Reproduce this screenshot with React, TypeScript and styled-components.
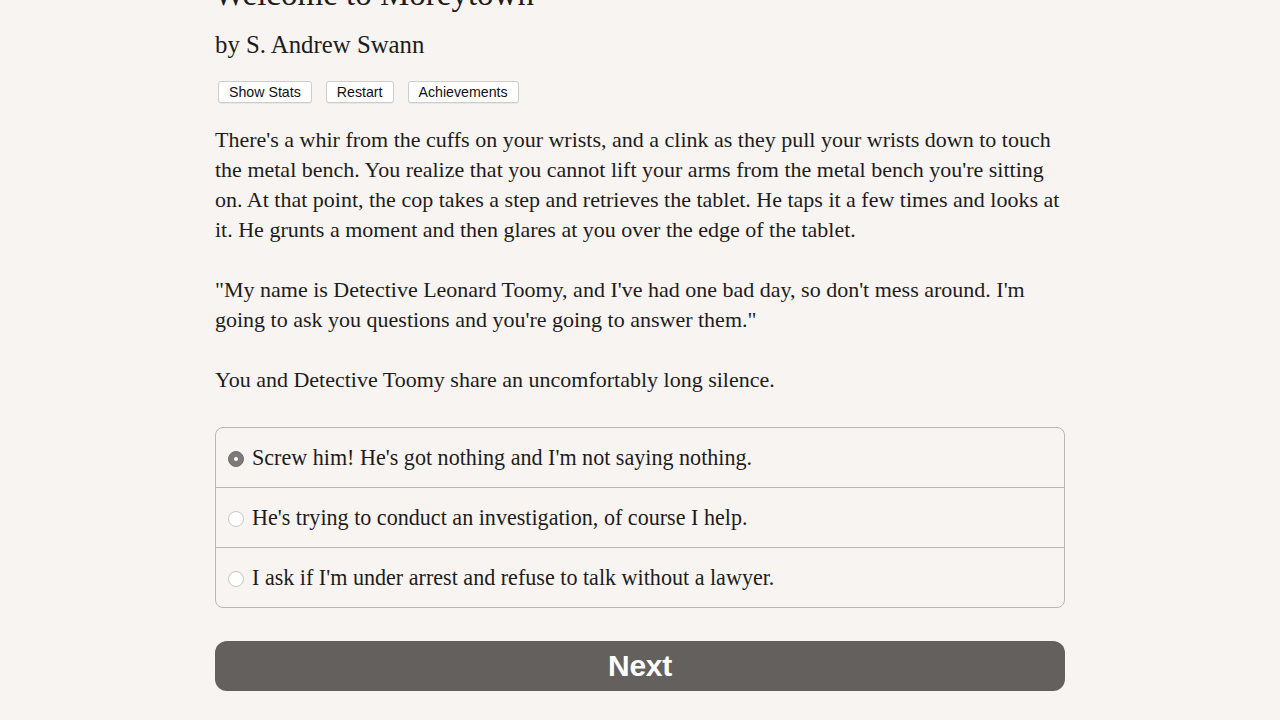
import styled, { createGlobalStyle } from 'styled-components';
import { useState } from 'react';

const GlobalStyle = createGlobalStyle`
  html, body {
    margin: 0;
    padding: 0;
    background: #f7f4f1;
  }
  body {
    font-family: 'Liberation Serif', 'Times New Roman', serif;
    color: #1e1c1b;
    overflow: hidden;
  }
`;

const choices = [
  "Screw him! He's got nothing and I'm not saying nothing.",
  "He's trying to conduct an investigation, of course I help.",
  "I ask if I'm under arrest and refuse to talk without a lawyer.",
];

const App = () => {
  const [selected, setSelected] = useState(0);
  return (
    <>
      <GlobalStyle />
      <Page>
        <Title>Welcome to Moreytown</Title>
        <Author>by S. Andrew Swann</Author>
        <Toolbar>
          <SmallButton>Show Stats</SmallButton>
          <SmallButton>Restart</SmallButton>
          <SmallButton>Achievements</SmallButton>
        </Toolbar>
        <Story>
          <p>
            There's a whir from the cuffs on your wrists, and a clink as they pull your wrists down to touch
            the metal bench. You realize that you cannot lift your arms from the metal bench you're sitting
            on. At that point, the cop takes a step and retrieves the tablet. He taps it a few times and looks at
            it. He grunts a moment and then glares at you over the edge of the tablet.
          </p>
          <p>
            "My name is Detective Leonard Toomy, and I've had one bad day, so don't mess around. I'm
            going to ask you questions and you're going to answer them."
          </p>
          <p>You and Detective Toomy share an uncomfortably long silence.</p>
        </Story>
        <ChoiceList>
          {choices.map((c, i) => (
            <Choice key={i} onClick={() => setSelected(i)}>
              <Radio checked={selected === i} />
              <span>{c}</span>
            </Choice>
          ))}
        </ChoiceList>
        <NextButton>Next</NextButton>
      </Page>
    </>
  );
};

export default App;

const Page = styled.div`
  width: 850px;
  margin: 0 auto;
`;

const Title = styled.h1`
  margin: -26px 0 0 -1px;
  font-size: 33px;
  font-weight: normal;
  line-height: 40px;
  white-space: nowrap;
`;

const Author = styled.h2`
  margin: 16px 0 0 0;
  font-size: 24.8px;
  font-weight: normal;
  line-height: 30px;
`;

const Toolbar = styled.div`
  display: flex;
  gap: 14px;
  margin: 21px 0 0 3px;
`;

const SmallButton = styled.button`
  font-family: 'Liberation Sans', Arial, sans-serif;
  font-size: 14.2px;
  color: #111;
  background: #fff;
  border: 1px solid #cfcccb;
  border-radius: 3px;
  height: 22px;
  padding: 0 10px;
  box-shadow: 0 1px 1px rgba(0, 0, 0, 0.06);
`;

const Story = styled.div`
  margin-top: 22px;
  font-size: 22px;
  line-height: 30px;
  p {
    margin: 0 0 30px 0;
  }
  p:last-child {
    margin-bottom: 0;
  }
`;

const ChoiceList = styled.div`
  border: 1px solid #b9b6b4;
  border-radius: 8px;
  margin-top: 32px;
  overflow: hidden;
`;

const Choice = styled.label`
  display: flex;
  align-items: center;
  gap: 8px;
  height: 59px;
  padding-left: 12px;
  font-size: 22.1px;
  cursor: pointer;
  & + & {
    border-top: 1px solid #b9b6b4;
  }
`;

const Radio = styled.span<{ checked: boolean }>`
  width: 16px;
  height: 16px;
  border-radius: 50%;
  box-sizing: border-box;
  flex: none;
  margin-top: 2px;
  background: ${({ checked }) => (checked ? '#7d7a79' : '#fff')};
  border: 1px solid ${({ checked }) => (checked ? '#6f6c6b' : '#c9c6c4')};
  position: relative;
  ${({ checked }) =>
    checked &&
    `&::after {
      content: '';
      position: absolute;
      left: 5px;
      top: 5px;
      width: 4px;
      height: 4px;
      border-radius: 50%;
      background: #fff;
    }`}
`;

const NextButton = styled.button`
  display: block;
  width: 100%;
  height: 50px;
  margin-top: 33px;
  border: none;
  border-radius: 12px;
  background: #63605e;
  color: #fff;
  font-family: 'Liberation Sans', Arial, sans-serif;
  font-weight: bold;
  font-size: 30px;
  letter-spacing: -0.3px;
`;
